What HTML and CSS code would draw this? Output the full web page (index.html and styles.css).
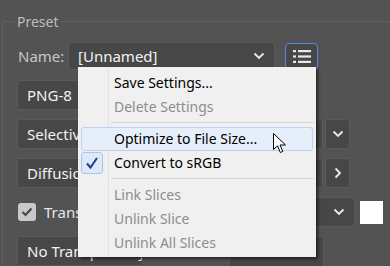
FILE: index.html
```html
<!DOCTYPE html>
<html lang="en">
<head>
    <meta charset="UTF-8">
    <title>Save for Web - Preset</title>
    <link rel="stylesheet" href="styles.css">
</head>
<body>
    <!-- Preset Panel -->
    <fieldset class="preset">
        <legend>Preset</legend>

        <div class="row name-row">
            <span class="label">Name:</span>
            <div class="field name-field">
                <span class="value">[Unnamed]</span>
                <svg class="chev" width="12" height="8" viewBox="0 0 12 8"><path d="M1.5 1.5 L6 6 L10.5 1.5" fill="none" stroke="#e8e8e8" stroke-width="1.9"/></svg>
            </div>
            <button class="menu-btn">
                <svg width="18" height="13" viewBox="0 0 18 13">
                    <rect x="0" y="0" width="3" height="2.2" fill="#e8e8e8"/>
                    <rect x="5" y="0" width="13" height="2.2" fill="#e8e8e8"/>
                    <rect x="0" y="5.4" width="3" height="2.2" fill="#e8e8e8"/>
                    <rect x="5" y="5.4" width="13" height="2.2" fill="#e8e8e8"/>
                    <rect x="0" y="10.8" width="3" height="2.2" fill="#e8e8e8"/>
                    <rect x="5" y="10.8" width="13" height="2.2" fill="#e8e8e8"/>
                </svg>
            </button>
        </div>

        <div class="row">
            <div class="field w-format"><span class="value">PNG-8</span></div>
            <span class="text interlaced">Interlaced</span>
        </div>

        <div class="row">
            <div class="field w-format"><span class="value">Selective</span></div>
            <div class="field w-mid"></div>
            <div class="field small-btn">
                <svg width="12" height="8" viewBox="0 0 12 8"><path d="M1.5 1.5 L6 6 L10.5 1.5" fill="none" stroke="#e8e8e8" stroke-width="1.9"/></svg>
            </div>
        </div>

        <div class="row">
            <div class="field w-format"><span class="value">Diffusion</span></div>
            <div class="field w-mid"></div>
            <div class="field small-btn">
                <svg width="8" height="12" viewBox="0 0 8 12"><path d="M1.5 1.5 L6 6 L1.5 10.5" fill="none" stroke="#e8e8e8" stroke-width="1.9"/></svg>
            </div>
        </div>

        <div class="row">
            <span class="checkbox">
                <svg width="12" height="10" viewBox="0 0 12 10"><path d="M1.5 5 L4.5 8 L10.5 1.5" fill="none" stroke="#4a4a4a" stroke-width="2.2"/></svg>
            </span>
            <span class="text">Transparency</span>
            <div class="field matte">
                <svg class="chev" width="12" height="8" viewBox="0 0 12 8"><path d="M1.5 1.5 L6 6 L10.5 1.5" fill="none" stroke="#e8e8e8" stroke-width="1.9"/></svg>
            </div>
            <span class="swatch"></span>
        </div>

        <div class="row last-row">
            <div class="field w-dither"><span class="value">No Transparency Dither</span></div>
            <div class="field w-amount"></div>
        </div>
    </fieldset>

    <!-- Preset Menu -->
    <div class="popup">
        <div class="item">Save Settings...</div>
        <div class="item disabled">Delete Settings</div>
        <div class="sep"></div>
        <div class="item hover">Optimize to File Size...</div>
        <div class="item checked">
            <span class="check">
                <svg width="14" height="14" viewBox="0 0 14 14"><path d="M2 7.5 L5.5 11.5 L12 2" fill="none" stroke="#1d3b98" stroke-width="2"/></svg>
            </span>
            Convert to sRGB
        </div>
        <div class="sep"></div>
        <div class="item disabled">Link Slices</div>
        <div class="item disabled">Unlink Slice</div>
        <div class="item disabled">Unlink All Slices</div>
    </div>

    <!-- Mouse Cursor -->
    <svg class="cursor" width="14" height="22" viewBox="0 0 14 22">
        <path d="M0.5 0.5 L0.5 16.5 L4.5 12.8 L7.3 19.5 L9.8 18.4 L7 12 L12.5 12 Z" fill="#fff" stroke="#000" stroke-width="1"/>
    </svg>
</body>
</html>
```

FILE: styles.css
```css
body {
    margin: 0;
    width: 390px;
    height: 266px;
    overflow: hidden;
    background-color: #535353;
    font-family: 'Noto Sans', 'Open Sans', sans-serif;
    color: #d6d6d6;
    position: relative;
}

/* Preset Panel */
.preset {
    box-sizing: border-box;
    margin: 12px 0 0 2px;
    padding: 11px 0 0 14px;
    border: 1px solid #606060;
    border-right: none;
    border-bottom: none;
    border-radius: 3px 0 0 0;
    height: 254px;
    overflow: hidden;
}

.preset legend {
    padding: 0 2px;
    margin-left: -2px;
    font-size: 14px;
    color: #bdbdbd;
}

.row {
    display: flex;
    align-items: center;
    height: 30px;
    margin-bottom: 9px;
}

.name-row {
    height: 28px;
    margin-bottom: 10px;
}

.last-row {
    margin-bottom: 0;
    align-items: flex-start;
}

.label {
    font-size: 15px;
    color: #c6c6c6;
    width: 50px;
    padding-left: 1px;
}

.field {
    box-sizing: border-box;
    height: 100%;
    background-color: #474747;
    border: 1px solid #5a5a5a;
    border-radius: 3px;
    display: flex;
    align-items: center;
    padding: 0 9px;
    overflow: hidden;
}

.value {
    font-size: 15px;
    color: #f2f2f2;
    white-space: nowrap;
}

.name-field {
    width: 207px;
    justify-content: space-between;
}

.chev {
    margin-left: auto;
    flex-shrink: 0;
}

.menu-btn {
    margin-left: 10px;
    width: 33px;
    height: 27px;
    background-color: #474747;
    border: 1.5px solid #4a8fdc;
    border-radius: 4px;
    display: flex;
    align-items: center;
    justify-content: center;
    padding: 0;
}

.w-format {
    width: 132px;
}

.interlaced {
    margin-left: 116px;
    font-size: 15px;
    color: #e0e0e0;
}

.w-mid {
    width: 160px;
    margin-left: 14px;
}

.small-btn {
    width: 25px;
    margin-left: 2px;
    justify-content: center;
    padding: 0;
}

.checkbox {
    width: 18px;
    height: 18px;
    background-color: #c9c9c9;
    border-radius: 3px;
    display: flex;
    align-items: center;
    justify-content: center;
    margin-left: 1px;
}

.text {
    font-size: 15px;
    color: #e6e6e6;
    white-space: nowrap;
}

.row .text {
    margin-left: 8px;
}

.matte {
    margin-left: auto;
    width: 70px;
    margin-right: 5px;
}

.swatch {
    width: 23px;
    height: 23px;
    background-color: #fff;
    margin-right: 7px;
}

.w-dither {
    width: 126px;
    height: 30px;
}

.w-amount {
    width: 95px;
    margin-left: 86px;
    height: 32px;
}

/* Preset Menu */
.popup {
    position: absolute;
    left: 78px;
    top: 67px;
    width: 238px;
    box-sizing: border-box;
    padding: 4px 0 2px;
    background-color: #f0f0f0;
    box-shadow: 2px 2px 3px rgba(0, 0, 0, 0.55);
    background-image: linear-gradient(#e2e2e2, #e2e2e2);
    background-size: 1px 100%;
    background-position: 30px 0;
    background-repeat: no-repeat;
}

.item {
    position: relative;
    height: 24px;
    line-height: 24px;
    padding-left: 36px;
    font-size: 14px;
    color: #000;
    white-space: nowrap;
}

.item.disabled {
    color: #8d8d8d;
}

.item.hover {
    margin: 0 3px;
    padding-left: 32px;
    box-sizing: border-box;
    border: 1px solid #bcd3ef;
    border-radius: 3px;
    line-height: 22px;
    background-color: #e6eefa;
}

.sep {
    height: 8px;
    margin-left: 33px;
    margin-right: 2px;
    background-image: linear-gradient(#d6d6d6, #d6d6d6);
    background-size: 100% 1px;
    background-position: 0 3px;
    background-repeat: no-repeat;
}

.check {
    position: absolute;
    left: 3px;
    top: 1px;
    width: 22px;
    height: 22px;
    box-sizing: border-box;
    background-color: #dde9f7;
    border: 1px solid #a9c6ea;
    border-radius: 3px;
    display: flex;
    align-items: center;
    justify-content: center;
}

.cursor {
    position: absolute;
    left: 273px;
    top: 133px;
}
```
